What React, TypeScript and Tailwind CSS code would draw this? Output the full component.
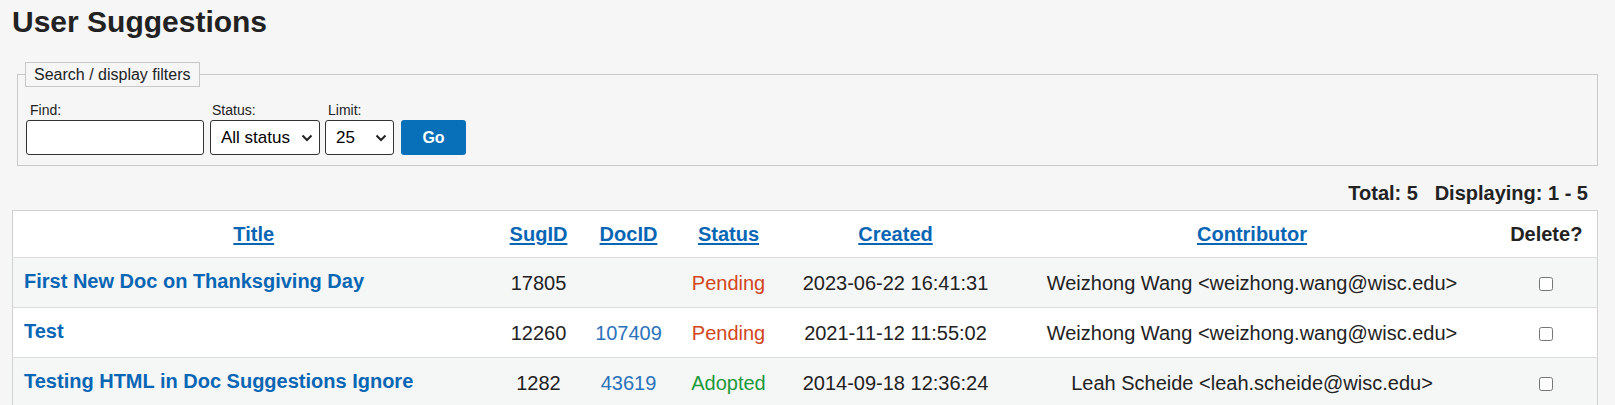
import React from 'react'

const rows = [
  {
    title: 'First New Doc on Thanksgiving Day',
    sugId: '17805',
    docId: '',
    status: 'Pending',
    created: '2023-06-22 16:41:31',
    contributor: 'Weizhong Wang <weizhong.wang@wisc.edu>',
  },
  {
    title: 'Test',
    sugId: '12260',
    docId: '107409',
    status: 'Pending',
    created: '2021-11-12 11:55:02',
    contributor: 'Weizhong Wang <weizhong.wang@wisc.edu>',
  },
  {
    title: 'Testing HTML in Doc Suggestions Ignore',
    sugId: '1282',
    docId: '43619',
    status: 'Adopted',
    created: '2014-09-18 12:36:24',
    contributor: 'Leah Scheide <leah.scheide@wisc.edu>',
  },
]

function Chevron() {
  return (
    <svg
      className="pointer-events-none absolute right-[7px] top-1/2 -translate-y-1/2"
      width="12"
      height="8"
      viewBox="0 0 12 8"
      fill="none"
    >
      <path d="M1.5 1.5l4.5 4.5 4.5-4.5" stroke="#222" strokeWidth="2" />
    </svg>
  )
}

function HeadLink({ children }: { children: React.ReactNode }) {
  return (
    <a href="#" className="text-[#0866b4] underline underline-offset-[2px]">
      {children}
    </a>
  )
}

export default function App() {
  return (
    <div
      className="min-h-screen bg-[#f6f6f6] px-[12px] pt-[5px] text-[#222]"
      style={{ fontFamily: '"Liberation Sans", Arial, sans-serif' }}
    >
      <h1 className="text-[30px] font-bold leading-[34px]">User Suggestions</h1>

      <fieldset className="mx-[5px] mt-[23px] border border-[#c8c8c8] pl-[7px] pb-[10px]">
        <legend className="border border-[#c8c8c8] px-[8px] py-[2px] text-[16px] leading-[19px]">
          Search / display filters
        </legend>
        <div className="flex items-end pl-[1px] pt-[15px]">
          <div className="flex flex-col">
            <label className="pl-[4px] text-[14px] leading-[16px] mb-[2px]">Find:</label>
            <input
              type="text"
              className="h-[35px] w-[178px] rounded-[3px] border border-[#333] bg-white px-2 text-[17px]"
            />
          </div>
          <div className="ml-[6px] flex flex-col">
            <label className="pl-[2px] text-[14px] leading-[16px] mb-[2px]">Status:</label>
            <div className="relative">
              <select className="h-[35px] w-[110px] appearance-none rounded-[3px] border border-[#333] bg-white pl-[10px] text-[17px] text-black">
                <option>All status</option>
              </select>
              <Chevron />
            </div>
          </div>
          <div className="ml-[5px] flex flex-col">
            <label className="pl-[3px] text-[14px] leading-[16px] mb-[2px]">Limit:</label>
            <div className="relative">
              <select className="h-[35px] w-[69px] appearance-none rounded-[3px] border border-[#333] bg-white pl-[10px] text-[17px] text-black">
                <option>25</option>
              </select>
              <Chevron />
            </div>
          </div>
          <button className="ml-[7px] h-[35px] w-[65px] rounded-[3px] bg-[#0870b9] text-[16px] font-bold text-white">
            Go
          </button>
        </div>
      </fieldset>

      <div className="mt-[16px] mb-[5px] w-[1586px] pr-[10px] text-right text-[20px] font-bold leading-[23px]">
        Total: 5&nbsp;&nbsp;&nbsp;Displaying: 1 - 5
      </div>

      <table className="w-[1586px] table-fixed border-collapse border border-[#d0d0d0] bg-white text-[20px]">
        <colgroup>
          <col className="w-[482px]" />
          <col className="w-[88px]" />
          <col className="w-[92px]" />
          <col className="w-[108px]" />
          <col className="w-[226px]" />
          <col className="w-[487px]" />
          <col className="w-[102px]" />
        </colgroup>
        <thead>
          <tr className="h-[47px] border-b border-[#dcdcdc] font-bold">
            <th className="text-center">
              <HeadLink>Title</HeadLink>
            </th>
            <th className="text-center">
              <HeadLink>SugID</HeadLink>
            </th>
            <th className="text-center">
              <HeadLink>DocID</HeadLink>
            </th>
            <th className="text-center">
              <HeadLink>Status</HeadLink>
            </th>
            <th className="text-center">
              <HeadLink>Created</HeadLink>
            </th>
            <th className="text-center">
              <HeadLink>Contributor</HeadLink>
            </th>
            <th className="text-center">Delete?</th>
          </tr>
        </thead>
        <tbody>
          {rows.map((r, i) => (
            <tr
              key={r.sugId}
              className={`h-[50px] border-b border-[#dcdcdc] ${i % 2 === 0 ? 'bg-[#f5f6f6]' : 'bg-white'}`}
            >
              <td className="pl-[11px] pb-[4px] text-left">
                <a href="#" className="font-bold text-[#0866b4]">
                  {r.title}
                </a>
              </td>
              <td className="text-center">{r.sugId}</td>
              <td className="text-center">
                {r.docId && (
                  <a href="#" className="text-[#2a72ba]">
                    {r.docId}
                  </a>
                )}
              </td>
              <td
                className={`text-center ${
                  r.status === 'Adopted' ? 'text-[#1d9a3b]' : 'text-[#d2461c]'
                }`}
              >
                {r.status}
              </td>
              <td className="text-center">{r.created}</td>
              <td className="text-center">{r.contributor}</td>
              <td className="text-center">
                <input type="checkbox" className="h-[14px] w-[14px] align-middle" />
              </td>
            </tr>
          ))}
        </tbody>
      </table>
    </div>
  )
}
